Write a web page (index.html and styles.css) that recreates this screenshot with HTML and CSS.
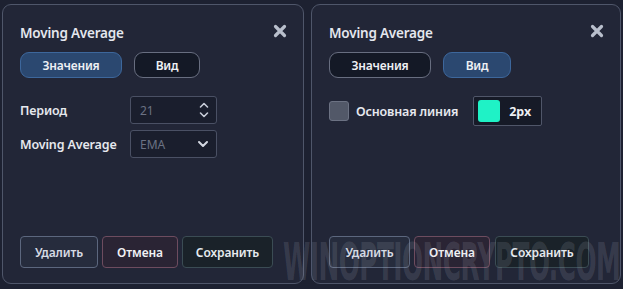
FILE: index.html
```html
<!DOCTYPE html>
<html lang="ru">
<head>
<meta charset="utf-8">
<link rel="stylesheet" href="styles.css">
</head>
<body>
<div class="stage">
  <div class="panel panel-left">
    <div class="head">
      <div class="title">Moving Average</div>
      <svg class="close" width="14" height="14" viewBox="0 0 14 14"><path d="M2.5 2.5 L11.5 11.5 M11.5 2.5 L2.5 11.5" stroke="#b9bfcc" stroke-width="3.2" stroke-linecap="round"/></svg>
    </div>
    <div class="tabs">
      <button class="tab tab-wide active">Значения</button>
      <button class="tab tab-narrow">Вид</button>
    </div>
    <div class="form">
      <div class="row">
        <span class="label">Период</span>
        <div class="field">
          <span class="value">21</span>
          <svg class="spin" width="10" height="18" viewBox="0 0 10 18"><path d="M1.5 6 L5 2.5 L8.5 6 M1.5 12 L5 15.5 L8.5 12" fill="none" stroke="#c7ccd8" stroke-width="1.6" stroke-linecap="round" stroke-linejoin="round"/></svg>
        </div>
      </div>
      <div class="row">
        <span class="label">Moving Average</span>
        <div class="field">
          <span class="value">EMA</span>
          <svg class="chev" width="12" height="8" viewBox="0 0 12 8"><path d="M2 2 L6 6 L10 2" fill="none" stroke="#d4d8e2" stroke-width="2" stroke-linecap="round" stroke-linejoin="round"/></svg>
        </div>
      </div>
    </div>
    <div class="footer">
      <button class="btn btn-del">Удалить</button>
      <button class="btn btn-cancel">Отмена</button>
      <button class="btn btn-save">Сохранить</button>
    </div>
  </div>
  <div class="panel panel-right">
    <div class="head">
      <div class="title">Moving Average</div>
      <svg class="close" width="14" height="14" viewBox="0 0 14 14"><path d="M2.5 2.5 L11.5 11.5 M11.5 2.5 L2.5 11.5" stroke="#b9bfcc" stroke-width="3.2" stroke-linecap="round"/></svg>
    </div>
    <div class="tabs">
      <button class="tab tab-wide">Значения</button>
      <button class="tab tab-narrow active">Вид</button>
    </div>
    <div class="line-row">
      <span class="check"></span>
      <span class="label line-label">Основная линия</span>
      <div class="colorbox">
        <span class="swatch"></span>
        <span class="px">2px</span>
      </div>
    </div>
    <div class="footer footer-right">
      <button class="btn btn-del">Удалить</button>
      <button class="btn btn-cancel">Отмена</button>
      <button class="btn btn-save">Сохранить</button>
    </div>
  </div>
  <div class="watermark">WINOPTIONCRYPTO.COM</div>
</div>
</body>
</html>
```
FILE: styles.css
```css
* { box-sizing: border-box; }
html, body {
  margin: 0;
  padding: 0;
  background: #1d2131;
  width: 623px;
  height: 289px;
  overflow: hidden;
  font-family: "Noto Sans", "Open Sans", sans-serif;
}
.stage {
  position: relative;
  display: flex;
  gap: 7px;
  padding: 4px 2px 5px 2px;
  height: 289px;
}
.panel {
  background: #222637;
  border: 1px solid #4f566a;
  border-radius: 9px;
  height: 280px;
  display: flex;
  flex-direction: column;
  padding: 17px 16px 15px 17px;
}
.panel-left { width: 302px; }
.panel-right { width: 310px; padding-left: 17px; }
.head {
  display: flex;
  align-items: center;
  justify-content: space-between;
  height: 22px;
}
.title {
  color: #e4e7ee;
  font-size: 13.5px;
  font-weight: 600;
  letter-spacing: -0.2px;
}
.close { margin-right: 0; margin-top: -5px; }
.tabs {
  display: flex;
  gap: 12px;
  margin-top: 8px;
}
.tab {
  height: 26px;
  border-radius: 9px;
  border: 1px solid #686e80;
  background: #141926;
  color: #eef0f4;
  font-family: "Noto Sans", sans-serif;
  font-size: 12px;
  font-weight: 600;
  letter-spacing: -0.2px;
  padding: 0;
}
.tab.active {
  background: #2b4870;
  border: 1px solid #3d679c;
}
.tab-wide { width: 102px; }
.tab-narrow { width: 66px; }
.panel-right .tab-narrow { width: 68px; }
.form {
  display: flex;
  flex-direction: column;
  gap: 6px;
  margin-top: 18px;
}
.row {
  display: flex;
  align-items: center;
}
.label {
  color: #e6e8ee;
  font-size: 12.5px;
  font-weight: 600;
  width: 110px;
  letter-spacing: -0.15px;
}
.field {
  width: 87px;
  height: 28px;
  border: 1px solid #4a5064;
  border-radius: 3px;
  background: #1a1e2d;
  display: flex;
  align-items: center;
  justify-content: space-between;
  padding: 0 8px 0 9px;
}
.value {
  color: #6b7284;
  font-size: 12px;
}
.spin { margin-right: -1px; }
.chev { margin-right: -1px; }
.line-row {
  display: flex;
  align-items: center;
  margin-top: 18px;
}
.check {
  width: 20px;
  height: 20px;
  border-radius: 3px;
  background: #525868;
  border: 1px solid #6c7283;
}
.line-label {
  width: auto;
  margin-left: 7px;
}
.colorbox {
  margin-left: 15px;
  width: 69px;
  height: 30px;
  border: 1px solid #505669;
  background: #161a27;
  border-radius: 2px;
  display: flex;
  align-items: center;
  padding-left: 4px;
}
.swatch {
  width: 22px;
  height: 22px;
  border-radius: 3px;
  background: #1ff2c6;
}
.px {
  color: #eef0f4;
  font-size: 12.5px;
  font-weight: 700;
  margin-left: 9px;
}
.footer {
  margin-top: auto;
  display: flex;
  gap: 4px;
}
.btn {
  height: 32px;
  border-radius: 4px;
  font-family: "Noto Sans", sans-serif;
  font-size: 12px;
  font-weight: 600;
  letter-spacing: -0.1px;
  padding: 0;
}
.btn-del {
  width: 78px;
  background: #262c3d;
  border: 1px solid #5c677e;
  color: #d7dbe4;
}
.btn-cancel {
  width: 76px;
  background: #2a2434;
  border: 1px solid #6d4c5f;
  color: #f1f1f4;
}
.btn-save {
  width: 91px;
  background: #1a2229;
  border: 1px solid #3b4c54;
  color: #e6eaee;
}
.footer-right .btn-del { width: 81px; }
.footer-right .btn-save { width: 94px; margin-left: 1px; }
.watermark {
  position: absolute;
  left: 283px;
  top: 238px;
  width: max-content;
  font-family: "DejaVu Sans Condensed", "DejaVu Sans", sans-serif;
  font-weight: 700;
  font-size: 52px;
  line-height: 48px;
  color: rgba(200, 205, 220, 0.14);
  transform: scaleX(0.53);
  transform-origin: left top;
  white-space: nowrap;
  letter-spacing: -1px;
  pointer-events: none;
}
```
